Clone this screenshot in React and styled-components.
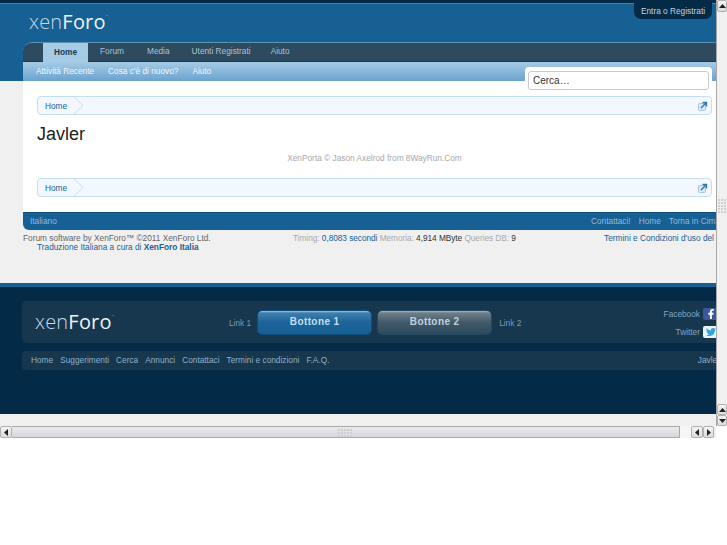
import React from "react";
import styled, { createGlobalStyle } from "styled-components";
import { FaFacebookF, FaTwitter } from "react-icons/fa";

const Global = createGlobalStyle`
  html, body { margin: 0; padding: 0; background: #fff; }
  body { font-family: "Liberation Sans", Arial, sans-serif; font-size: 8.3px; }
  a { text-decoration: none; color: inherit; }
`;

const Frame = styled.div`
  width: 727px;
  height: 438px;
  display: grid;
  grid-template-columns: 716px 11px;
  grid-template-rows: 414px 24px;
`;
const Viewport = styled.div`
  position: relative;
  overflow: hidden;
  background: #f0f0f0;
  grid-column: 1;
  grid-row: 1;
`;
const Page = styled.div`
  width: 731px;
`;

const Header = styled.header`
  margin-top: 3px;
  border-top: 1px solid #3f84b3;
  background: #176093;
  padding-left: 23px;
  box-sizing: border-box;
  height: 78px;
  display: flex;
  flex-direction: column;
`;
const TopStrip = styled.div`
  position: absolute;
  top: 0;
  left: 0;
  right: 0;
  height: 3px;
  background: #032a47;
`;
const LogoRow = styled.div`
  height: 38px;
  padding: 5px 0 0 6px;
  box-sizing: border-box;
`;
const LogoText = styled.div`
  font-family: "Open Sans", sans-serif;
  font-weight: 300;
  font-size: 20px;
  line-height: 26px;
  letter-spacing: 0.2px;
  color: #c6d9e6;
  b { font-weight: 400; color: #eef4f8; }
  sup { font-size: 3px; vertical-align: 12px; line-height: 0; }
`;
const NavBar = styled.nav`
  border-top: 1px solid #5d91b5;
  border-top-left-radius: 9px;
  background: #2d4a5e;
  display: flex;
  padding-left: 20px;
  border-bottom: 1px solid #1f3a4e;
  height: 18px;
`;
const Tab = styled.a`
  display: flex;
  align-items: center;
  padding-bottom: 2px;
  color: ${(p) => (p.$active ? "#1c3b55" : "#a9c4d8")};
  font-weight: ${(p) => (p.$active ? 700 : 400)};
  background: ${(p) => (p.$active ? "#a5cbe5" : "transparent")};
  margin-left: ${(p) => p.$gap || 0}px;
  margin-top: ${(p) => (p.$active ? "-1px" : "0")};
  margin-bottom: ${(p) => (p.$active ? "-1px" : "0")};
  ${(p) => p.$active && "border-top: 1px solid #5d91b5; box-sizing: border-box; width: 45px; justify-content: center;"}
`;
const SubNav = styled.div`
  height: 19px;
  box-sizing: border-box;
  padding: 0 0 2px 13px;
  background: linear-gradient(#a5cbe5, #6aa3cf);
  display: flex;
  align-items: center;
  gap: 14px;
  color: #f0f6fb;
`;

const Content = styled.main`
  margin-left: 23px;
  height: 131px;
  background: #fff;
  padding: 15px 19px 0 14px;
  box-sizing: border-box;
  display: flex;
  flex-direction: column;
`;
const Breadcrumb = styled.div`
  height: 19px;
  box-sizing: border-box;
  border: 1px solid #c5dff0;
  border-radius: 4px;
  background: #f2f8fd;
  display: flex;
  align-items: center;
  justify-content: space-between;
  padding: 0 3px 0 7px;
  color: #176093;
`;
const Crumb = styled.div`
  display: flex;
  align-items: center;
  height: 100%;
  gap: 7px;
`;
const Title = styled.h1`
  margin: 9px 0 0;
  font-size: 18px;
  font-weight: 400;
  line-height: 21px;
  color: #222;
`;
const Credit = styled.div`
  margin: 7px 0 14px;
  height: 12px;
  line-height: 12px;
  text-align: center;
  color: #a8a8a8;
`;

const FootBar = styled.div`
  margin-left: 23px;
  height: 18px;
  box-sizing: border-box;
  border-top: 1px solid #0f4f7d;
  border-bottom-left-radius: 6px;
  background: #176093;
  display: flex;
  align-items: center;
  justify-content: space-between;
  padding: 0 11px 1px 7px;
  color: #8fbbdb;
`;
const FootLinks = styled.div`
  display: flex;
  gap: 8px;
`;
const Legal = styled.div`
  margin-left: 23px;
  height: 53px;
  padding-top: 4px;
  box-sizing: border-box;
  display: grid;
  grid-template-columns: 270px 311px 1fr;
  color: #666;
  line-height: 9px;
`;
const Translation = styled.div`
  padding-left: 14px;
  color: #176093;
  b { font-weight: 700; }
`;
const Debug = styled.div`
  color: #aaa;
  letter-spacing: -0.05px;
  span { color: #176093; }
  em { font-style: normal; color: #333; }
`;
const Terms = styled.div`
  color: #176093;
  white-space: nowrap;
`;

const Bottom = styled.footer`
  height: 131px;
  background: #032a47;
  border-top: 4px solid #176093;
  box-sizing: border-box;
  padding: 14px 0 0 22px;
`;
const Promo = styled.div`
  height: 42px;
  background: #17374f;
  border-radius: 5px 0 0 5px;
  display: grid;
  grid-template-columns: 194px 1fr auto;
  align-items: center;
  padding-left: 13px;
`;
const Cta = styled.div`
  display: flex;
  align-items: center;
  color: #7a9cb5;
`;
const CtaLink = styled.a`
  margin: ${(p) => p.$m};
  position: relative;
  top: 1px;
`;
const Button = styled.a`
  width: 115px;
  height: 25px;
  box-sizing: border-box;
  border-radius: 5px;
  border: 1px solid ${(p) => (p.$blue ? "#0f4f7d" : "#24485f")};
  display: flex;
  align-items: center;
  justify-content: center;
  font-size: 10px;
  font-weight: 700;
  letter-spacing: 0.4px;
  padding-bottom: 1px;
  margin-right: 5px;
  background: ${(p) =>
    p.$blue
      ? "linear-gradient(#a6c4da 0, #3f7fad 2px, #1c6499 50%, #176093 100%)"
      : "linear-gradient(#a9b4bb 0, #6d7f8b 2px, #42596a 50%, #2d4a5e 100%)"};
  background-clip: padding-box;
  color: ${(p) => (p.$blue ? "#c5deef" : "#c2d2dd")};
`;
const Social = styled.div`
  display: flex;
  flex-direction: column;
  align-items: flex-end;
  gap: 4px;
  padding: 2px 12px 0 0;
  color: #7fa6c4;
`;
const SocialRow = styled.a`
  display: flex;
  align-items: center;
  gap: 3px;
  height: 14px;
`;
const Badge = styled.span`
  width: 16px;
  height: 12px;
  border-radius: 2px;
  display: flex;
  align-items: center;
  justify-content: center;
  background: ${(p) => (p.$fb ? "#3b5998" : "#e9f4fb")};
  color: ${(p) => (p.$fb ? "#fff" : "#2fa6e0")};
  font-size: 10px;
`;
const LinkRow = styled.div`
  margin-top: 8px;
  height: 19px;
  box-sizing: border-box;
  padding: 0 11px 1px 9px;
  background: #17374f;
  border-radius: 4px 0 0 4px;
  display: flex;
  align-items: center;
  justify-content: space-between;
  color: #8fb0c9;
`;
const LinkList = styled.div`
  display: flex;
  gap: 7px;
`;

const SearchBox = styled.div`
  position: absolute;
  top: 67px;
  left: 525px;
  width: 187px;
  height: 26px;
  box-sizing: border-box;
  background: #fff;
  border-radius: 4px 4px 0 0;
  padding: 4px 3px;
`;
const SearchInput = styled.div`
  height: 19px;
  box-sizing: border-box;
  border: 1px solid #ccc;
  border-radius: 3px;
  padding-left: 4px;
  line-height: 17px;
  font-size: 10px;
  color: #333;
`;
const LoginTab = styled.a`
  position: absolute;
  top: 3px;
  left: 634px;
  width: 78px;
  height: 16px;
  padding-bottom: 1px;
  box-sizing: border-box;
  background: #032a47;
  border-radius: 0 0 7px 7px;
  color: #c0d3e0;
  display: flex;
  align-items: center;
  justify-content: center;
`;

const VBar = styled.div`
  position: relative;
  background: #f0f0f0;
  border-left: 1px solid #a8a8a8;
  grid-column: 2;
  grid-row: 1 / span 2;
  height: 426px;
  box-sizing: border-box;
  display: flex;
  flex-direction: column;
  justify-content: space-between;
`;
const VGroup = styled.div`
  display: flex;
  flex-direction: column;
`;
const ArrowBtn = styled.div`
  width: ${(p) => p.$w || 10}px;
  height: ${(p) => p.$h || 11}px;
  box-sizing: border-box;
  border: 1px solid #b0b0b0;
  border-radius: 2px;
  background: linear-gradient(#f4f4f4, #dcdcdc);
  display: flex;
  align-items: center;
  justify-content: center;
`;
const Grip = styled.div`
  position: absolute;
  display: grid;
  grid-template-columns: repeat(${(p) => p.$cols}, 2px);
  gap: 1px;
  top: ${(p) => p.$top};
  left: ${(p) => p.$left};
  i { width: 2px; height: 2px; background: #cfcfcf; }
`;
const HBar = styled.div`
  grid-column: 1;
  grid-row: 2;
  background: #f0f0f0;
  padding-top: 12px;
  box-sizing: border-box;
  display: flex;
  width: 716px;
`;
const HThumb = styled.div`
  position: relative;
  width: 668px;
  height: 12px;
  box-sizing: border-box;
  border-top: 1px solid #aaa;
  border-bottom: 1px solid #aaa;
  border-right: 1px solid #aaa;
  background: linear-gradient(#e9e9ee, #d6d6dc);
`;
const HSpacer = styled.div`
  width: 11px;
  background: #f6f6f6;
`;

const Tri = ({ dir }) => {
  const pts = { up: "0,4 3.5,0 7,4", down: "0,0 3.5,4 7,0", left: "4,0 0,3.5 4,7", right: "0,0 4,3.5 0,7" }[dir];
  const vertical = dir === "up" || dir === "down";
  return (
    <svg width={vertical ? 7 : 4} height={vertical ? 4 : 7}>
      <polygon points={pts} fill="#222" />
    </svg>
  );
};

const Chevron = () => (
  <svg width="10" height="17" viewBox="0 0 10 17">
    <polyline points="0,0 9,8.5 0,17" fill="none" stroke="#c5dff0" />
  </svg>
);

const ExpandIcon = () => (
  <svg width="10" height="10" viewBox="0 0 10 10">
    <rect x="0.5" y="2.5" width="7" height="7" rx="1" fill="#d8e8f4" stroke="#a5c6de" />
    <path d="M3 7 L8 2 M4.5 1.5 H8.5 V5.5" fill="none" stroke="#2f76a8" strokeWidth="1.3" />
  </svg>
);

const Dots = ({ n }) => Array.from({ length: n }, (_, i) => <i key={i} />);

const Crumbs = () => (
  <Breadcrumb>
    <Crumb>
      <a>Home</a>
      <Chevron />
    </Crumb>
    <ExpandIcon />
  </Breadcrumb>
);

export default function App() {
  return (
    <>
      <Global />
      <Frame>
        <Viewport>
          <TopStrip />
          <Page>
            <Header>
              <LogoRow>
                <LogoText>
                  xen<b>Foro</b>
                  <sup>™</sup>
                </LogoText>
              </LogoRow>
              <NavBar>
                <Tab $active>Home</Tab>
                <Tab $gap={12}>Forum</Tab>
                <Tab $gap={23}>Media</Tab>
                <Tab $gap={22}>Utenti Registrati</Tab>
                <Tab $gap={20}>Aiuto</Tab>
              </NavBar>
              <SubNav>
                <a>Attività Recente</a>
                <a>Cosa c'è di nuovo?</a>
                <a>Aiuto</a>
              </SubNav>
            </Header>
            <Content>
              <Crumbs />
              <Title>Javler</Title>
              <Credit>XenPorta © Jason Axelrod from 8WayRun.Com</Credit>
              <Crumbs />
            </Content>
            <FootBar>
              <a>Italiano</a>
              <FootLinks>
                <a>Contattaci!</a>
                <a>Home</a>
                <a>Torna in Cima</a>
              </FootLinks>
            </FootBar>
            <Legal>
              <div>
                Forum software by XenForo™ ©2011 XenForo Ltd.
                <Translation>
                  Traduzione Italiana a cura di <b>XenForo Italia</b>
                </Translation>
              </div>
              <Debug>
                Timing: <span>0,8083 secondi</span> Memoria: <em>4,914 MByte</em> Queries DB: <em>9</em>
              </Debug>
              <Terms>Termini e Condizioni d'uso del sito</Terms>
            </Legal>
            <Bottom>
              <Promo>
                <LogoText>
                  xen<b>Foro</b>
                  <sup>™</sup>
                </LogoText>
                <Cta>
                  <CtaLink $m="0 6px 0 0">Link 1</CtaLink>
                  <Button $blue>Bottone 1</Button>
                  <Button>Bottone 2</Button>
                  <CtaLink $m="0 0 0 2px">Link 2</CtaLink>
                </Cta>
                <Social>
                  <SocialRow>
                    Facebook
                    <Badge $fb>
                      <FaFacebookF />
                    </Badge>
                  </SocialRow>
                  <SocialRow>
                    Twitter
                    <Badge>
                      <FaTwitter />
                    </Badge>
                  </SocialRow>
                </Social>
              </Promo>
              <LinkRow>
                <LinkList>
                  <a>Home</a>
                  <a>Suggerimenti</a>
                  <a>Cerca</a>
                  <a>Annunci</a>
                  <a>Contattaci</a>
                  <a>Termini e condizioni</a>
                  <a>F.A.Q.</a>
                </LinkList>
                <a>Javler</a>
              </LinkRow>
            </Bottom>
          </Page>
          <LoginTab>Entra o Registrati</LoginTab>
          <SearchBox>
            <SearchInput>Cerca…</SearchInput>
          </SearchBox>
        </Viewport>
        <VBar>
          <ArrowBtn $w={10} $h={12}>
            <Tri dir="up" />
          </ArrowBtn>
          <Grip $cols={4} $top="199px" $left="1px">
            <Dots n={20} />
          </Grip>
          <VGroup>
            <ArrowBtn>
              <Tri dir="up" />
            </ArrowBtn>
            <ArrowBtn>
              <Tri dir="down" />
            </ArrowBtn>
          </VGroup>
        </VBar>
        <HBar>
          <ArrowBtn $w={12} $h={12}>
            <Tri dir="left" />
          </ArrowBtn>
          <HThumb>
            <Grip $cols={5} $top="2px" $left="326px">
              <Dots n={15} />
            </Grip>
          </HThumb>
          <HSpacer />
          <ArrowBtn $w={12} $h={12}>
            <Tri dir="left" />
          </ArrowBtn>
          <ArrowBtn $w={11} $h={12}>
            <Tri dir="right" />
          </ArrowBtn>
        </HBar>
      </Frame>
    </>
  );
}
